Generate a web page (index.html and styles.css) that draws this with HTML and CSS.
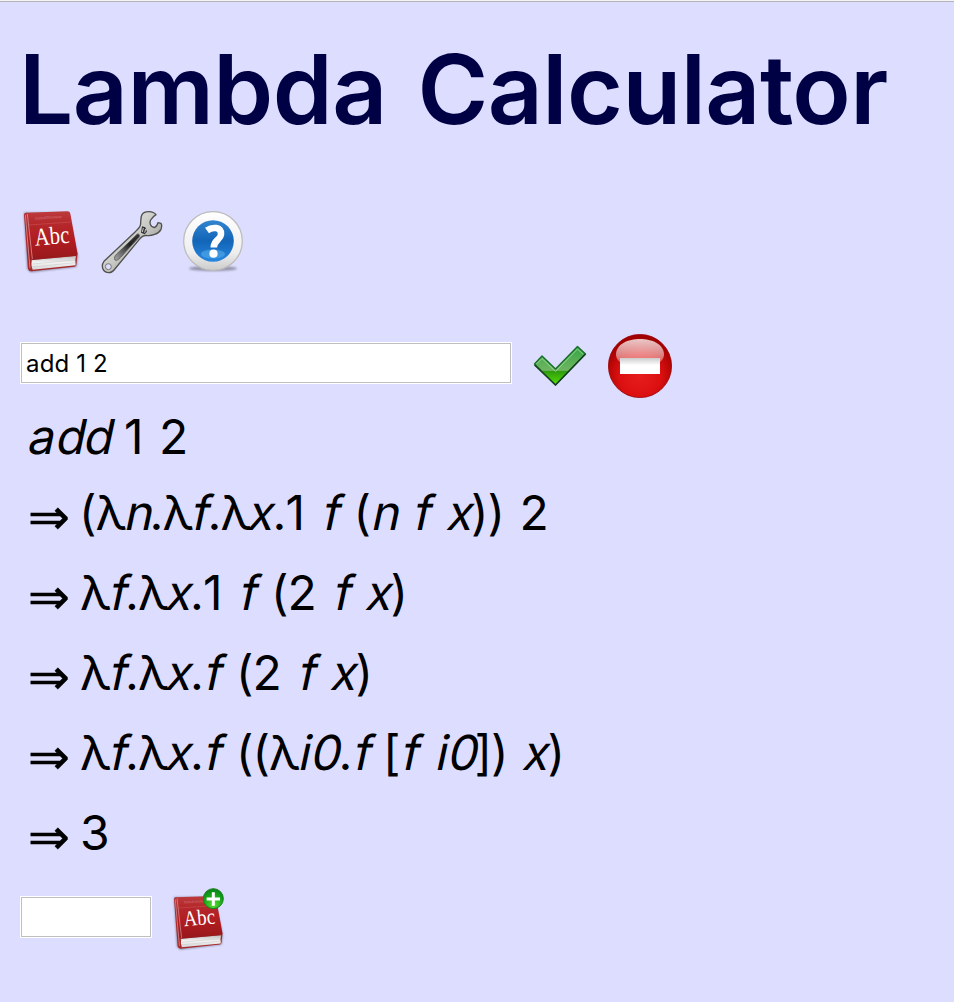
FILE: index.html
```html
<!DOCTYPE html>
<html lang="en">
<head>
<meta charset="utf-8">
<title>Lambda Calculator</title>
<link rel="stylesheet" href="styles.css">
</head>
<body>
<svg width="0" height="0" class="defs" aria-hidden="true">
  <defs>
    <linearGradient id="cover" x1="0" y1="0" x2="0" y2="1"><stop offset="0" stop-color="#bc3a3d"/><stop offset=".25" stop-color="#b5282b"/><stop offset=".6" stop-color="#b01c20"/><stop offset="1" stop-color="#96181b"/></linearGradient>
    <linearGradient id="pages" x1="0" y1="0" x2="0" y2="1"><stop offset="0" stop-color="#bbb"/><stop offset=".5" stop-color="#f4f4f4"/><stop offset="1" stop-color="#d5d5d5"/></linearGradient>
    <filter id="soft" x="-20%" y="-20%" width="140%" height="140%"><feGaussianBlur stdDeviation="3"/></filter>
    <filter id="softer" x="-20%" y="-60%" width="140%" height="220%"><feGaussianBlur stdDeviation="1"/></filter>
    <g id="book">
      <path d="M42 38 176 38 203 168 199 200 62 217 52 207Z" fill="#334" opacity=".55" filter="url(#soft)"/>
      <path d="M42 44Q42 38 50 38L64 184 202 166 199 195Q198 199 193 200L64 214Q56 214 54 206Z" fill="#a8282b"/>
      <path d="M66 180 198 167Q194 180 197 196L68 209Q62 196 66 180Z" fill="url(#pages)"/>
      <path d="M68 192 195 180M67 201 195 188" stroke="#c4c4c4" stroke-width="1.500"/>
      <path d="M48 38 172 34Q180 34 181 41L203 163Q203 167 198 168L67 180Q60 180 58 174Z" fill="url(#cover)"/>
      <path d="M46 44 60 205M52 42 67 177" fill="none" stroke="#d98e90" stroke-width="2.500"/>
      <path d="M56 75 184 66" stroke="#cf5b5d" stroke-width="1.500"/>
      <text x="76" y="59" class="book-small" textLength="80" lengthAdjust="spacingAndGlyphs" transform="rotate(-4 76 59)">Oxford Dictionary</text>
      <text x="76" y="137" class="book-label" textLength="104" lengthAdjust="spacingAndGlyphs" transform="rotate(-5 76 137)">Abc</text>
    </g>
  </defs>
</svg>
<h1 class="title">Lambda Calculator</h1>
<nav class="toolbar">
  <svg class="book" viewBox="30 18 192 204"><use href="#book"/></svg>
  <svg class="wrench" viewBox="30 18 192 204">
    <defs><linearGradient id="steel" x1="0" y1="0" x2="1" y2="1"><stop offset="0" stop-color="#fafaf8"/><stop offset=".5" stop-color="#c8c8c4"/><stop offset="1" stop-color="#777"/></linearGradient>
    <linearGradient id="grip" x1="1" y1="0" x2="0" y2="1"><stop offset="0" stop-color="#333"/><stop offset=".4" stop-color="#222"/><stop offset="1" stop-color="#aaa"/></linearGradient></defs>
    <path d="M198 44C190 33 164 31 156 44C150 54 154 66 151 76C149 84 142 88 136 95L42 184C32 198 38 218 57 218C66 218 72 211 77 204L150 116Q156 107 168 106C184 109 206 102 213 88Q217 76 213 70L204 68Q201 80 193 83L185 79Q177 71 182 60Q188 50 198 44Z" fill="url(#steel)" stroke="#50504e" stroke-width="4" stroke-linejoin="round"/>
    <path d="M142 102Q152 102 147 112L92 172Q80 184 75 180C72 174 74 168 80 162Z" fill="url(#grip)" stroke="#666" stroke-width="3"/>
    <path d="M156 79 166 82 171 95 164 103 153 98Z" fill="#333"/><path d="M157 96 160 84M164 98 167 87" stroke="#ccc" stroke-width="3"/>
    <circle cx="55" cy="200" r="9" fill="#ddf" stroke="#777" stroke-width="3"/>
  </svg>
  <svg class="help" viewBox="0 0 64 64">
    <defs><linearGradient id="ring" x1="0" y1="0" x2="0" y2="1"><stop offset="0" stop-color="#fff"/><stop offset=".7" stop-color="#eee"/><stop offset="1" stop-color="#ccc"/></linearGradient>
    <linearGradient id="blue" x1="0" y1="0" x2="0" y2="1"><stop offset="0" stop-color="#3485cf"/><stop offset=".5" stop-color="#1265b7"/><stop offset="1" stop-color="#2888df"/></linearGradient></defs>
    <ellipse cx="32" cy="59.500" rx="24" ry="2.500" fill="#667" opacity=".65" filter="url(#softer)"/>
    <circle cx="32" cy="32" r="29.300" fill="url(#ring)" stroke="#bbb" stroke-width="1.200"/>
    <circle cx="32" cy="32" r="20.800" fill="url(#blue)"/>
    <ellipse cx="32" cy="45" rx="12" ry="4.500" fill="#67bdf5" opacity=".45"/>
    <path d="M26 21.500C31 17.800 41 17.500 40 25.500C39.500 31 32.800 31 32.800 38.500" fill="none" stroke="#fff" stroke-width="6.600"/>
    <circle cx="32.500" cy="44.700" r="4.100" fill="#fff"/>
  </svg>
</nav>
<form class="entry">
  <input class="field" type="text" value="add 1 2" aria-label="Expression">
  <svg class="check" viewBox="0 0 54 42">
    <defs><linearGradient id="green" x1="0" y1="0" x2="0" y2="1"><stop offset="0" stop-color="#35a545"/><stop offset=".62" stop-color="#6fb561"/><stop offset=".64" stop-color="#2f9a10"/><stop offset="1" stop-color="#55e000"/></linearGradient></defs>
    <path d="M1.500 19 9 11 22.500 24 44.500 1.500 52.500 9 22.500 40Z" fill="url(#green)" stroke="#17702a" stroke-width="1.400" stroke-linejoin="round"/>
    <path d="M3.500 19 9 13.500 22.500 26.500 44.500 4 50 9" fill="none" stroke="#a5dc9d" stroke-width="1" opacity=".8"/>
    <path d="M1.500 20 22.500 40 52.500 9" fill="none" stroke="#173d20" stroke-width="1.300"/>
  </svg>
  <svg class="stop" viewBox="0 0 64 64">
    <defs><radialGradient id="red" cx=".5" cy=".65" r=".6"><stop offset="0" stop-color="#e61c1c"/><stop offset=".55" stop-color="#dc1010"/><stop offset="1" stop-color="#a00000"/></radialGradient>
    <linearGradient id="gloss" x1="0" y1="0" x2="0" y2="1"><stop offset="0" stop-color="#fff" stop-opacity=".78"/><stop offset="1" stop-color="#fff" stop-opacity=".3"/></linearGradient>
    <linearGradient id="bar" x1="0" y1="0" x2="0" y2="1"><stop offset="0" stop-color="#ccc"/><stop offset=".45" stop-color="#fff"/></linearGradient></defs>
    <circle cx="32" cy="32" r="31.600" fill="url(#red)" stroke="#9a0000" stroke-width=".8"/>
    <path d="M8 20C9 0 55 0 56 20C56 30 44 32 32 32S8 30 8 20Z" fill="url(#gloss)"/>
    <path d="M12 24H52V40H12Z" fill="url(#bar)"/>
  </svg>
</form>
<main class="steps">
  <div class="step first"><i class="a">a</i><i class="a">d</i><i class="a">d</i><s></s><b class="one">1</b><s></s><b class="num">2</b></div>
  <div class="step"><span class="arrow">⇒</span><b class="par open">(</b><b class="lam">λ</b><i class="n">n</i><b class="dot">.</b><b class="lam">λ</b><i class="f">f</i><b class="dot">.</b><b class="lam">λ</b><i class="x">x</i><b class="dot">.</b><b class="one">1</b><s></s><i class="f">f</i><s class="mid"></s><b class="par">(</b><i class="n">n</i><s class="mid"></s><i class="f">f</i><s class="wide"></s><i class="x">x</i><b class="par">)</b><b class="par">)</b><s class="mid"></s><b class="num">2</b></div>
  <div class="step"><span class="arrow">⇒</span><b class="lam">λ</b><i class="f">f</i><b class="dot">.</b><b class="lam">λ</b><i class="x">x</i><b class="dot">.</b><b class="one">1</b><s></s><i class="f">f</i><s class="mid"></s><b class="par">(</b><b class="num">2</b><s></s><i class="f">f</i><s class="wide"></s><i class="x">x</i><b class="par">)</b></div>
  <div class="step"><span class="arrow">⇒</span><b class="lam">λ</b><i class="f">f</i><b class="dot">.</b><b class="lam">λ</b><i class="x">x</i><b class="dot">.</b><i class="f">f</i><s class="mid"></s><b class="par">(</b><b class="num">2</b><s></s><i class="f">f</i><s class="wide"></s><i class="x">x</i><b class="par">)</b></div>
  <div class="step"><span class="arrow">⇒</span><b class="lam">λ</b><i class="f">f</i><b class="dot">.</b><b class="lam">λ</b><i class="x">x</i><b class="dot">.</b><i class="f">f</i><s class="mid"></s><b class="par">(</b><b class="par">(</b><b class="lam">λ</b><i class="i">i</i><i class="num">0</i><b class="dot">.</b><i class="f">f</i><s></s><b class="par">[</b><i class="f">f</i><s class="wide"></s><i class="i">i</i><i class="zero">0</i><b class="par">]</b><b class="par">)</b><s class="mid"></s><i class="x">x</i><b class="par">)</b></div>
  <div class="step"><span class="arrow">⇒</span><b class="num">3</b></div>
</main>
<form class="save">
  <input class="field name" type="text" aria-label="Name">
  <svg class="add-book" viewBox="30 18 192 204">
    <defs><radialGradient id="plus" cx=".5" cy=".8" r=".8"><stop offset="0" stop-color="#5be02c"/><stop offset=".6" stop-color="#16a51b"/><stop offset="1" stop-color="#078016"/></radialGradient></defs>
    <use href="#book" transform="translate(4 18.500) scale(.906 .876)"/>
    <circle cx="160" cy="56" r="30" fill="url(#plus)" stroke="#16801d" stroke-width="3"/>
    <path d="M160 37V77M140 57H180" stroke="#fff" stroke-width="9"/>
  </svg>
</form>
</body>
</html>
```
FILE: styles.css
```css
* { box-sizing: border-box; }
body {
  margin: 0;
  min-height: 1002px;
  padding: 0 20px;
  border-top: 1px solid #f4f4f4;
  background: #ddddff;
  color: #000;
  font-family: Inter, "Liberation Sans", sans-serif;
}
body::before { content: ""; display: block; height: 1px; margin: 0 -20px; background: #b4b4b8; }
.defs { position: absolute; }
.title {
  margin: 29px 0 0 -1px;
  height: 116px;
  color: #000044;
  font-size: 96px;
  line-height: 116px;
  font-weight: 585;
  letter-spacing: -0.5px;
  word-spacing: 7px;
  white-space: nowrap;
}
.toolbar { display: flex; align-items: center; height: 68px; margin-top: 59px; }
.book { width: 64px; height: 68px; }
.wrench { width: 64px; height: 68px; margin-left: 16px; }
.help { width: 64px; height: 64px; margin: 1px 0 0 17px; }
.book-label { fill: #fff; font-family: "Liberation Serif", serif; font-size: 75px; }
.book-small { fill: #d67a7b; font-family: "Liberation Serif", serif; font-size: 12px; }
.entry { display: flex; align-items: center; height: 66px; margin-top: 59px; }
.field {
  width: 492px;
  height: 42px;
  margin: -6px 0 0;
  padding: 0 5px;
  border: 1px solid #fff;
  outline: 1px solid #c0c0c0;
  outline-offset: -2px;
  border-radius: 0;
  background: #fff;
  color: #000;
  font: 24px Inter, "Liberation Sans", sans-serif;
  letter-spacing: 0.15px;
}
.check { width: 54px; height: 42px; margin-left: 21px; }
.stop { width: 64px; height: 64px; margin-left: 21px; }
.steps { padding-left: 8px; font-size: 48px; line-height: 80px; }
.step { display: flex; height: 80px; }
.step b { font-weight: 400; }
.step i { font-style: normal; transform: skewX(-12deg); transform-origin: 0 57px; }
.step s { width: 14px; text-decoration: none; }
.step .mid { width: 15.5px; }
.step .wide { width: 17px; }
.step .lam { width: 27.5px; }
.step .a { width: 28px; }
.step .n { width: 26.5px; }
.step .f { width: 17.5px; }
.step .x { width: 24.5px; text-indent: -2px; }
.step .i { width: 12px; }
.step .dot { width: 13px; }
.step .one { width: 21px; }
.step .num { width: 30px; }
.step .zero { width: 28.5px; }
.step .par { width: 16.5px; }
.step .open { margin-left: -1px; }
.first { height: 74px; margin-left: -2px; line-height: 76px; }
.first i { transform-origin: 0 55px; }
.arrow { width: 52px; padding-top: 4px; font-family: "DejaVu Sans", sans-serif; font-size: 50px; -webkit-text-stroke: 0.5px #000; }
.save { display: flex; align-items: center; margin-top: 8px; }
.name { width: 132px; }
.add-book { width: 64px; height: 68px; margin: 5px 0 0 18px; }
.save .name { margin-top: -1px; }
```
